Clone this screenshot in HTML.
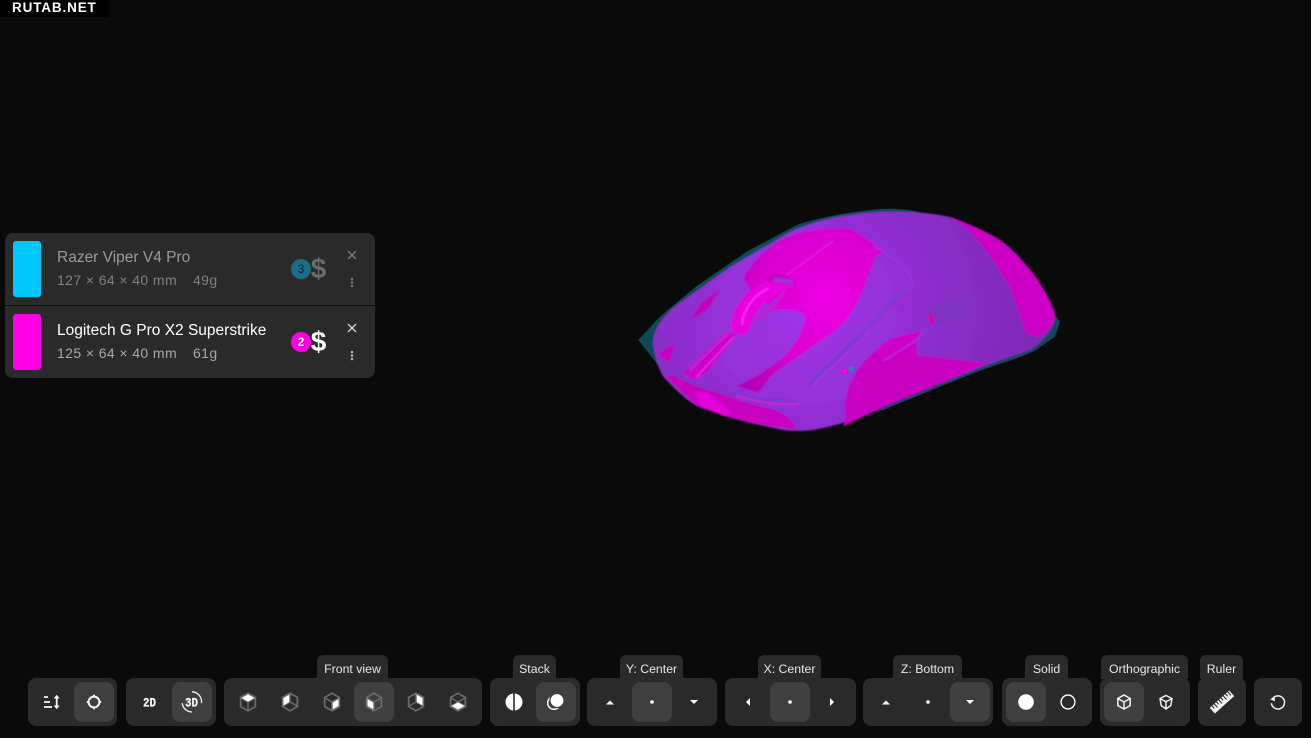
<!DOCTYPE html>
<html><head><meta charset="utf-8">
<style>
html,body{margin:0;padding:0;background:#0a0a0a;width:1311px;height:738px;overflow:hidden;font-family:"Liberation Sans","DejaVu Sans",sans-serif}
.a{position:absolute}
#wm{left:0;top:0;width:109px;height:17px;background:#000;color:#fff;font-weight:700;font-size:13.5px;line-height:15px;padding-left:12px;box-sizing:border-box;letter-spacing:.85px}
#panel{left:5px;top:233px;width:370px;height:145px;background:#2a2a2a;border-radius:8px}
#div{left:5px;top:305px;width:370px;height:1px;background:#0d0d0d}
.sw{left:13px;width:28px;height:56px;border-radius:3px}
.nm{left:57px;font-size:15.5px;line-height:18px;white-space:nowrap}
.sb{left:57px;font-size:14px;line-height:16px;white-space:pre;letter-spacing:.4px}
.bd{left:291px;width:20px;height:20px;border-radius:50%;font-size:12px;line-height:20px;text-align:center}
.dl{left:308px;width:21px;text-align:center;font-size:28px;line-height:28px;font-weight:700}
.g{background:#2a2a2a;border-radius:8px;top:678px;height:48px}
.b{top:682px;width:40px;height:40px;border-radius:8px}
.on{background:#3f3f3f}
.t{top:655px;height:24px;background:#2a2a2a;border-radius:6px 6px 0 0;color:#e8e8e8;font-size:12.3px;line-height:28px;text-align:center;white-space:nowrap}
svg{position:absolute;overflow:visible}
.i{top:682px;width:40px;height:40px}
</style></head><body>
<div class="a" id="wm">RUTAB.NET</div>

<svg style="left:630px;top:200px" width="440" height="240" viewBox="0 0 1320 720">
<defs>
<radialGradient id="pu" gradientUnits="userSpaceOnUse" cx="520" cy="340" r="800"><stop offset="0" stop-color="#a032e8"/><stop offset=".5" stop-color="#8c2ecc"/><stop offset="1" stop-color="#7828ae"/></radialGradient>
<radialGradient id="ma" gradientUnits="userSpaceOnUse" cx="590" cy="300" r="340"><stop offset="0" stop-color="#ec00e2"/><stop offset=".6" stop-color="#d800d0"/><stop offset="1" stop-color="#b400b2"/></radialGradient>
<filter id="bl"><feGaussianBlur stdDeviation="2.6"/></filter>
</defs>
<path fill="#0d4a58" d="M25 420 L90 350 L200 258 L350 155 L500 75 C560 55 640 38 750 27 C800 25 840 28 870 38 L960 56 C1020 77 1065 100 1105 124 C1145 152 1175 189 1204 223 C1230 259 1250 294 1266 332 L1290 365 L1275 410 L1215 452 L1160 475 L1060 508 L910 568 L760 630 L500 650 L300 640 L80 490 Z"/>
<g filter="url(#bl)">
<path fill="url(#pu)" d="M68 425 C72 385 95 355 130 322 L300 200 L480 95 C550 62 640 42 750 35 C830 32 900 38 960 51 C1020 72 1070 95 1110 120 C1150 148 1180 185 1209 219 C1235 255 1255 290 1272 330 C1280 360 1272 375 1262 392 C1245 415 1230 432 1210 445 C1195 452 1180 458 1160 465 L1060 500 L910 560 L760 622 C725 640 690 652 660 662 C620 675 585 684 550 690 C510 695 470 692 450 688 C390 675 340 665 300 652 C270 642 230 630 200 618 C170 600 130 565 100 530 C85 505 68 455 68 425 Z"/>
<path fill="#cc00c4" d="M960 51 C1020 72 1070 95 1110 120 C1150 148 1180 185 1209 219 C1235 255 1255 290 1272 330 C1278 350 1272 368 1262 378 C1245 395 1235 410 1215 410 C1195 405 1185 395 1175 365 C1165 330 1150 280 1130 245 C1100 190 1060 140 1025 100 C1005 80 985 65 960 51 Z"/>
<path fill="url(#ma)" d="M340 235 C355 195 420 130 480 108 C530 88 600 82 650 85 C690 95 730 130 762 155 L735 170 C725 200 705 260 680 310 C660 350 630 385 590 410 C540 445 470 495 425 525 L385 578 L320 558 C370 535 440 495 480 450 C505 420 525 375 527 350 C515 332 490 328 460 328 L425 332 L400 300 L360 270 Z"/>
<path fill="#c800c0" d="M645 610 C650 570 665 530 705 480 L745 445 L765 482 L860 420 L862 465 C930 475 1010 480 1070 490 L910 560 L760 622 C725 640 690 652 640 680 C648 660 648 635 645 610 Z"/>
<path fill="#c800c0" d="M105 525 L200 618 L300 652 C360 670 430 682 497 688 C495 665 470 645 440 632 C400 620 350 612 300 590 C240 565 170 540 140 528 Z"/>
<path fill="#e400da" d="M190 575 L235 580 L305 640 L285 650 L215 618 Z"/>
<path fill="#c800c0" d="M82 462 L135 428 L118 488 Z"/>
<path fill="#c200ba" d="M182 358 L212 310 L272 266 L232 330 Z"/>
<path fill="#d000c8" d="M158 520 L290 395 L322 402 L232 515 L195 540 Z"/>
<path fill="none" stroke="#a83ce0" stroke-width="3" d="M178 512 L296 398"/>
<path fill="none" stroke="#e830e8" stroke-width="4" d="M198 532 L312 410"/>
<path fill="#b028d0" d="M372 352 L440 295 L472 262 L430 330 L385 370 Z"/>
<path fill="#e600de" d="M302 385 C305 330 345 262 410 245 L490 252 C450 270 400 300 375 345 L352 400 C340 410 315 405 302 385 Z"/>
<path fill="none" stroke="#ff20f8" stroke-width="7" d="M335 375 C340 330 370 285 415 265"/>
<path fill="#c800c8" d="M405 238 C430 215 460 218 490 238 L497 255 L440 248 Z"/>
<path fill="#9a30d8" d="M430 232 L488 240 L490 252 L430 245 Z"/>
<path fill="none" stroke="#7a34c4" stroke-width="6" d="M138 526 C220 570 320 600 500 603"/>
<path fill="none" stroke="#d428dc" stroke-width="4" d="M320 588 C380 605 440 618 515 610"/>
<path fill="none" stroke="#7040c0" stroke-width="6" d="M530 562 L700 395 L822 270"/>
<path fill="none" stroke="#ac3ae4" stroke-width="3" d="M552 552 L720 398"/>
<path fill="none" stroke="#c020c8" stroke-width="3" d="M765 338 L830 300"/>
<path fill="none" stroke="#a43ae0" stroke-width="2" d="M730 140 C790 170 850 210 850 260 L825 270"/>
<path fill="none" stroke="#e030e8" stroke-width="2" d="M470 225 L610 122"/>
<path fill="#d000c8" d="M745 450 C750 425 790 410 880 392 L855 420 C820 445 790 465 760 480 C750 480 742 470 745 450 Z"/>
<path fill="none" stroke="#b83ae0" stroke-width="2" d="M762 482 L860 422 L882 392"/>
<path fill="#8030c0" d="M885 345 L900 315 L1000 292 L1020 315 L1015 345 L920 375 Z"/>
<path fill="#d800b0" d="M893 345 L910 340 L912 375 L900 370 Z"/>
</g>
<circle cx="644" cy="514" r="9" fill="#ff00e6" stroke="#b01ca8" stroke-width="2"/>
<circle cx="663" cy="507" r="8" fill="#2b86b8"/>
</svg>

<div class="a" id="panel"></div>
<div class="a" id="div"></div>
<div class="a sw" style="top:241px;background:#00c8ff"></div>
<div class="a sw" style="top:314px;background:#ff00e6"></div>
<div class="a nm" style="top:249px;color:#9b9b9b">Razer Viper V4 Pro</div>
<div class="a sb" style="top:272px;color:#808080">127 × 64 × 40 mm</div>
<div class="a sb" style="top:272px;left:193px;color:#808080">49g</div>
<div class="a nm" style="top:322px;color:#fff">Logitech G Pro X2 Superstrike</div>
<div class="a sb" style="top:345px;color:#a8a8a8">125 × 64 × 40 mm</div>
<div class="a sb" style="top:345px;left:193px;color:#a8a8a8">61g</div>
<div class="a bd" style="top:259px;background:#1a6c88;color:#0a2530">3</div>
<div class="a dl" style="top:255px;color:#6a6a6a">$</div>
<div class="a bd" style="top:332px;background:#ff00e6;color:#fff;font-weight:700">2</div>
<div class="a dl" style="top:328px;color:#fff">$</div>
<svg style="left:347px;top:250px" width="10" height="10" viewBox="0 0 10 10"><path d="M1 1L9 9M9 1L1 9" stroke="#7a7a7a" stroke-width="1.3"/></svg>
<svg style="left:347px;top:323px" width="10" height="10" viewBox="0 0 10 10"><path d="M1 1L9 9M9 1L1 9" stroke="#d8d8d8" stroke-width="1.3"/></svg>
<svg style="left:350px;top:277px" width="4" height="11" viewBox="0 0 4 11"><g fill="#737373"><circle cx="2" cy="2" r="1.3"/><circle cx="2" cy="5.5" r="1.3"/><circle cx="2" cy="9" r="1.3"/></g></svg>
<svg style="left:350px;top:350px" width="4" height="11" viewBox="0 0 4 11"><g fill="#b0b0b0"><circle cx="2" cy="2" r="1.3"/><circle cx="2" cy="5.5" r="1.3"/><circle cx="2" cy="9" r="1.3"/></g></svg>

<div class="a g" style="left:28px;width:89px"></div>
<div class="a g" style="left:126px;width:90px"></div>
<div class="a g" style="left:224px;width:258px"></div>
<div class="a g" style="left:490px;width:90px"></div>
<div class="a g" style="left:587px;width:130px"></div>
<div class="a g" style="left:725px;width:131px"></div>
<div class="a g" style="left:863px;width:130px"></div>
<div class="a g" style="left:1002px;width:90px"></div>
<div class="a g" style="left:1100px;width:90px"></div>
<div class="a g" style="left:1198px;width:48px"></div>
<div class="a g" style="left:1254px;width:48px"></div>

<div class="a b on" style="left:74px"></div>
<div class="a b on" style="left:172px"></div>
<div class="a b on" style="left:354px"></div>
<div class="a b on" style="left:536px"></div>
<div class="a b on" style="left:632px"></div>
<div class="a b on" style="left:770px"></div>
<div class="a b on" style="left:950px"></div>
<div class="a b on" style="left:1006px"></div>
<div class="a b on" style="left:1104px"></div>

<div class="a t" style="left:317px;width:71px">Front view</div>
<div class="a t" style="left:513px;width:43px">Stack</div>
<div class="a t" style="left:620px;width:63px">Y: Center</div>
<div class="a t" style="left:758px;width:63px">X: Center</div>
<div class="a t" style="left:893px;width:69px">Z: Bottom</div>
<div class="a t" style="left:1025px;width:43px">Solid</div>
<div class="a t" style="left:1101px;width:87px">Orthographic</div>
<div class="a t" style="left:1200px;width:43px">Ruler</div>

<!-- sort -->
<svg class="i" style="left:32px" viewBox="0 0 40 40"><path d="M12 15H16M12 20H18M12 25H20" fill="none" stroke="#f4f4f4" stroke-width="1.7"/><path d="M24.7 15V25" fill="none" stroke="#f4f4f4" stroke-width="1.8"/><path d="M21.7 16.5L24.7 12.8L27.7 16.5ZM21.7 23.5L24.7 27.2L27.7 23.5Z" fill="#f4f4f4"/></svg>
<svg class="i" style="left:74px" viewBox="0 0 40 40"><circle cx="20" cy="20" r="5.4" fill="none" stroke="#f4f4f4" stroke-width="2"/><path d="M20 12.8V15.5M20 24.5V27.2M12.8 20H15.5M24.5 20H27.2" stroke="#f4f4f4" stroke-width="2"/></svg>
<!-- 2D/3D -->
<svg class="i" style="left:130px" viewBox="0 0 40 40"><text x="13" y="24.3" font-family="Liberation Mono,monospace" font-weight="700" font-size="12.5" fill="#f4f4f4" textLength="13" lengthAdjust="spacingAndGlyphs" stroke="#f4f4f4" stroke-width=".3">2D</text></svg>
<svg class="i" style="left:172px" viewBox="0 0 40 40"><text x="13" y="24.3" font-family="Liberation Mono,monospace" font-weight="700" font-size="12.5" fill="#f4f4f4" textLength="13" lengthAdjust="spacingAndGlyphs" stroke="#f4f4f4" stroke-width=".3">3D</text><path d="M20 9.8A10 10 0 0 1 29.5 21" fill="none" stroke="#f0f0f0" stroke-width="1.3"/><path d="M20 30A10 10 0 0 1 10.2 21" fill="none" stroke="#f0f0f0" stroke-width="1.3"/></svg>
<!-- cubes -->
<svg width="0" height="0"><defs>
<g id="hx"><path d="M10 1.2L17.4 5.5V14.5L10 18.8L2.6 14.5V5.5Z" fill="none" stroke="#6c6c6c" stroke-width="1.7"/></g>
<g id="y1"><path d="M10 10L3 6M10 10L17 6M10 10V18" fill="none" stroke="#6c6c6c" stroke-width="1.5"/></g>
<g id="y2"><path d="M10 10V2M10 10L3 14M10 10L17 14" fill="none" stroke="#6c6c6c" stroke-width="1.5"/></g>
</defs></svg>
<svg style="left:238px;top:692px" width="20" height="20" viewBox="0 0 20 20"><use href="#y1"/><path d="M10 2.2L16.5 6L10 9.6L3.5 6Z" fill="#fff"/><use href="#hx"/></svg>
<svg style="left:280px;top:692px" width="20" height="20" viewBox="0 0 20 20"><use href="#y2"/><path d="M3.3 6L9.3 2.5V10L3.3 13.5Z" fill="#fff"/><use href="#hx"/></svg>
<svg style="left:322px;top:692px" width="20" height="20" viewBox="0 0 20 20"><use href="#y1"/><path d="M10.7 10.5L16.7 7V14L10.7 17.5Z" fill="#fff"/><use href="#hx"/></svg>
<svg style="left:364px;top:692px" width="20" height="20" viewBox="0 0 20 20"><use href="#y1"/><path d="M3.3 7L9.3 10.5V17.5L3.3 14Z" fill="#fff"/><use href="#hx"/></svg>
<svg style="left:406px;top:692px" width="20" height="20" viewBox="0 0 20 20"><use href="#y2"/><path d="M10.7 2.5L16.7 6V13.5L10.7 10Z" fill="#fff"/><use href="#hx"/></svg>
<svg style="left:448px;top:692px" width="20" height="20" viewBox="0 0 20 20"><path d="M3 6L17 14M17 6L3 14" stroke="#6c6c6c" stroke-width="1.3"/><path d="M3.5 14L10 10.4L16.5 14L10 17.8Z" fill="#fff"/><use href="#hx"/></svg>
<!-- stack -->
<svg class="i" style="left:494px" viewBox="0 0 40 40"><circle cx="20" cy="20" r="8.5" fill="#fff"/><rect x="19.2" y="10" width="1.6" height="20" fill="#2a2a2a"/></svg>
<svg class="i" style="left:536px" viewBox="0 0 40 40"><circle cx="18" cy="21" r="6.3" fill="none" stroke="#f0f0f0" stroke-width="1.6"/><circle cx="21" cy="18.5" r="7.6" fill="#3f3f3f"/><circle cx="21" cy="18.5" r="6.4" fill="#fff"/></svg>
<!-- arrows -->
<svg class="i" style="left:590px" viewBox="0 0 40 40"><path d="M16 22.5L20 18.5L24 22.5Z" fill="#fff"/></svg>
<svg class="i" style="left:632px" viewBox="0 0 40 40"><circle cx="20" cy="20" r="1.8" fill="#fff"/></svg>
<svg class="i" style="left:674px" viewBox="0 0 40 40"><path d="M16 18L24 18L20 22Z" fill="#fff"/></svg>
<svg class="i" style="left:728px" viewBox="0 0 40 40"><path d="M22 16V24L18 20Z" fill="#fff"/></svg>
<svg class="i" style="left:770px" viewBox="0 0 40 40"><circle cx="20" cy="20" r="1.8" fill="#fff"/></svg>
<svg class="i" style="left:812px" viewBox="0 0 40 40"><path d="M18 16V24L22 20Z" fill="#fff"/></svg>
<svg class="i" style="left:866px" viewBox="0 0 40 40"><path d="M16 22.5L20 18.5L24 22.5Z" fill="#fff"/></svg>
<svg class="i" style="left:908px" viewBox="0 0 40 40"><circle cx="20" cy="20" r="1.8" fill="#fff"/></svg>
<svg class="i" style="left:950px" viewBox="0 0 40 40"><path d="M16 18L24 18L20 22Z" fill="#fff"/></svg>
<!-- solid -->
<svg class="i" style="left:1006px" viewBox="0 0 40 40"><circle cx="20" cy="20" r="7.8" fill="#fff"/></svg>
<svg class="i" style="left:1048px" viewBox="0 0 40 40"><circle cx="20" cy="20" r="6.9" fill="none" stroke="#fff" stroke-width="1.4"/></svg>
<!-- ortho -->
<svg class="i" style="left:1104px" viewBox="0 0 40 40"><path d="M20 13L26.2 16.5V23.5L20 27L13.8 23.5V16.5ZM13.8 16.5L20 20L26.2 16.5M20 20V27" fill="none" stroke="#f0f0f0" stroke-width="1.5"/></svg>
<svg class="i" style="left:1146px" viewBox="0 0 40 40"><path d="M20 13.5L26 16.5L24.8 23.5L20 27L15.2 23.5L14 16.5ZM14 16.5L20 19.8L26 16.5M20 19.8V27" fill="none" stroke="#f0f0f0" stroke-width="1.5"/></svg>
<!-- ruler -->
<svg class="i" style="left:1202px" viewBox="0 0 40 40"><g transform="rotate(-42 20 20)"><rect x="7" y="16.2" width="26" height="7.6" fill="#f2f2f2"/><path d="M10 16V19.5M13 16V21M16 16V19.5M19 16V21M22 16V19.5M25 16V21M28 16V19.5M31 16V21" stroke="#2a2a2a" stroke-width="1.1"/></g></svg>
<!-- reset -->
<svg class="i" style="left:1258px" viewBox="0 0 40 40"><path d="M14.6 16.6A6.6 6.6 0 1 1 13.4 21.2" fill="none" stroke="#f0f0f0" stroke-width="1.5"/><path d="M12 17.2L16.8 14.6L17 19.4Z" fill="#f0f0f0"/></svg>
</body></html>
